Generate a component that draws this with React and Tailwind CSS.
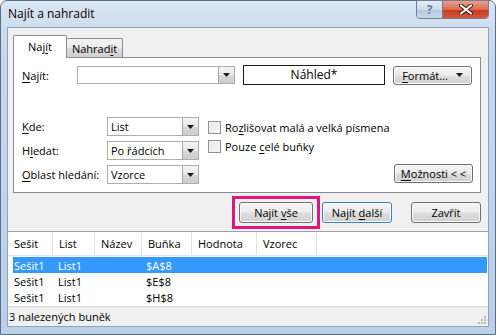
import React from "react";

const U = ({ children }) => <span className="underline underline-offset-[2px]">{children}</span>;

function Btn({ children, className = "", def = false }) {
  return (
    <div
      className={
        "flex items-center justify-center rounded-[3px] border bg-[linear-gradient(#f4f4f4,#ececec_48%,#dedede_52%,#d0d0d0)] shadow-[inset_0_0_0_1px_#fbfbfb] " +
        (def ? "border-[#3c7fb1] shadow-[inset_0_0_0_1px_#a9dcf6] " : "border-[#707070] ") +
        className
      }
    >
      {children}
    </div>
  );
}

const Arrow = () => (
  <svg width="7" height="4" viewBox="0 0 7 4">
    <path d="M0 0H7L3.5 4Z" fill="#1a1a1a" />
  </svg>
);

function DropBtn({ className = "" }) {
  return (
    <div className={"flex h-full w-[16px] items-center justify-center border-l border-[#a8a8a8] bg-[linear-gradient(#f4f4f4,#e8e8e8_50%,#d8d8d8_52%,#cdcdcd)] " + className}>
      <Arrow />
    </div>
  );
}

function Select({ value }) {
  return (
    <div className="flex h-[19px] w-[92px] items-center border border-[#abadb3] bg-white">
      <span className="flex-1 pl-[3px] leading-none">{value}</span>
      <DropBtn />
    </div>
  );
}

function Check({ children }) {
  return (
    <div className="flex h-[19px] items-center gap-[4px]">
      <div className="h-[13px] w-[13px] border border-[#8e8f8f] bg-[linear-gradient(135deg,#e5e5e5,#fafafa)] shadow-[inset_0_0_0_1px_#f4f4f4]" />
      <span className="leading-none">{children}</span>
    </div>
  );
}

export default function App() {
  return (
    <div className="h-[335px] w-[496px] bg-white font-['Open_Sans','Noto_Sans',sans-serif] text-[11px] text-black">
      <div className="flex h-[335px] w-[496px] flex-col rounded-t-[7px] border border-[#55708e] bg-[linear-gradient(#dbe6f3,#c9d9ec_40px,#bcd0e8)]">
        {/* title bar */}
        <div className="relative flex h-[26px] items-center pl-[7px]">
          <span className="text-[12px] leading-none">Najít a nahradit</span>
          <div className="absolute right-[6px] top-[-1px] flex h-[19px] overflow-hidden rounded-b-[4px] border border-[#6d7f96]">
            <div className="flex w-[26px] items-center justify-center border-r border-[#6d7f96] bg-[linear-gradient(#e6edf6,#cfdbea_50%,#b9c9dd_52%,#c9d8ea)] text-[12px] font-bold leading-none text-[#6a7e99]">
              ?
            </div>
            <div className="flex w-[45px] items-center justify-center bg-[linear-gradient(#eba08e,#dc6a52_50%,#c7381a_52%,#d9573a)]">
              <svg width="14" height="11" viewBox="0 0 14 11">
                <path d="M2 1.5L12 9.5M12 1.5L2 9.5" stroke="#3b1a14" strokeWidth="4" strokeLinecap="round" />
                <path d="M2 1.5L12 9.5M12 1.5L2 9.5" stroke="#ffffff" strokeWidth="2.2" strokeLinecap="round" />
              </svg>
            </div>
          </div>
        </div>

        {/* client */}
        <div className="mx-[6px] flex h-[300px] flex-col border border-[#8ea3bd] bg-[#f0f0f0]">
          {/* tabs */}
          <div className="pl-[5px] pr-[7px] pt-[7px]">
            <div className="flex h-[22px] items-end">
              <div className="relative z-10 -mb-px flex h-[23px] w-[54px] items-center justify-center rounded-t-[2px] border border-b-0 border-[#898c95] bg-white pb-[1px] leading-none">
                Naj<U>í</U>t
              </div>
              <div className="flex h-[19px] w-[56px] items-center justify-center rounded-t-[2px] border border-b-0 border-l-0 border-[#898c95] bg-[linear-gradient(#f2f2f2,#ebebeb_50%,#dddddd_52%,#cfcfcf)] leading-none">
                Nahrad<U>i</U>t
              </div>
            </div>
            <div className="flex h-[136px] flex-col border border-[#898c95] bg-white pl-[8px] pr-[7px] pt-[7px]">
              {/* row 1 */}
              <div className="flex h-[20px] items-center">
                <span className="w-[55px] leading-none">
                  <U>N</U>ajít:
                </span>
                <div className="flex h-[18px] w-[158px] items-center border border-[#abadb3] bg-white">
                  <div className="flex-1" />
                  <DropBtn />
                </div>
                <div className="ml-[8px] flex h-[20px] w-[142px] items-center justify-center border border-[#1a1a1a] bg-white text-[12px] leading-none">
                  Náhled*
                </div>
                <Btn className="ml-[8px] h-[19px] w-[79px] gap-[8px]">
                  <span className="leading-none">
                    <U>F</U>ormát...
                  </span>
                  <Arrow />
                </Btn>
              </div>
              {/* lower */}
              <div className="mt-[32px] flex">
                <div className="flex flex-col gap-[5px]">
                  {[
                    [<><U>K</U>de:</>, "List"],
                    [<>H<U>l</U>edat:</>, "Po řádcích"],
                    [<><U>O</U>blast hledání:</>, "Vzorce"],
                  ].map(([l, v], i) => (
                    <div key={i} className="flex h-[19px] items-center">
                      <span className="w-[85px] leading-none">{l}</span>
                      <Select value={v} />
                    </div>
                  ))}
                </div>
                <div className="ml-[9px] flex flex-col pt-[1px]">
                  <Check>
                    Ro<U>z</U>lišovat malá a velká písmena
                  </Check>
                  <Check>
                    Pouze <U>c</U>elé buňky
                  </Check>
                </div>
                <div className="flex-1" />
                <Btn className="mt-[47px] h-[19px] w-[79px]">
                  <span className="leading-none">
                    <U>M</U>ožnosti &lt; &lt;
                  </span>
                </Btn>
              </div>
            </div>
          </div>

          {/* buttons row */}
          <div className="mt-[3px] flex h-[33px] items-center pl-[224px]">
            <div className="flex h-[33px] w-[88px] items-center justify-center border-[3px] border-[#e0177f]">
              <Btn className="h-[21px] w-[74px]">
                <span className="leading-none">
                  Najít <U>v</U>še
                </span>
              </Btn>
            </div>
            <Btn def className="ml-[2px] h-[21px] w-[70px]">
              <span className="leading-none">
                Najít <U>d</U>alší
              </span>
            </Btn>
            <Btn className="ml-[19px] h-[21px] w-[70px]">
              <span className="leading-none">Zavřít</span>
            </Btn>
          </div>

          {/* list */}
          <div className="mt-[2px] flex h-[75px] flex-col border-t border-[#a0a0a0] bg-white">
            <div className="flex h-[24px] items-center border-b border-[#e5e5e5]">
              {[
                ["Sešit", "w-[45px]"],
                ["List", "w-[42px]"],
                ["Název", "w-[47px]"],
                ["Buňka", "w-[50px]"],
                ["Hodnota", "w-[65px]"],
                ["Vzorec", "w-[60px]"],
              ].map(([t, w]) => (
                <div key={t} className={"flex h-full items-center border-r border-[#e5e5e5] pl-[6px] leading-none " + w}>
                  {t}
                </div>
              ))}
            </div>
            <div className="flex flex-col pl-[5px] pr-[1px] pt-[1px]">
              {[
                ["Sešit1", "List1", "$A$8", true],
                ["Sešit1", "List1", "$E$8", false],
                ["Sešit1", "List1", "$H$8", false],
              ].map(([a, b, c, sel], i) => (
                <div key={i} className={"flex h-[16px] items-center leading-none " + (sel ? "bg-[#3399ff] text-white" : "")}>
                  <span className="w-[45px] pl-[1px]">{a}</span>
                  <span className="w-[88px]">{b}</span>
                  <span>{c}</span>
                </div>
              ))}
            </div>
          </div>

          {/* status */}
          <div className="relative flex flex-1 items-center border-t border-[#d9d9d9] pl-[1px]">
            <span className="leading-none">3 nalezených buněk</span>
            <div className="absolute bottom-[2px] right-[2px] grid grid-cols-3 gap-[1px]">
              {[0, 1, 2, 3, 4, 5, 6, 7, 8].map((i) => (
                <div key={i} className={"h-[2px] w-[2px] " + ([0, 1, 3].includes(i) ? "bg-transparent" : "bg-[#b8b8b8]")} />
              ))}
            </div>
          </div>
        </div>
      </div>
    </div>
  );
}
